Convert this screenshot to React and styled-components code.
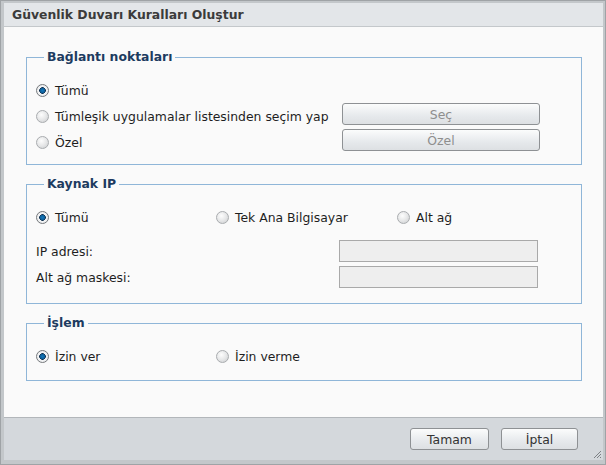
import React, { useState } from "react";
import styled, { createGlobalStyle } from "styled-components";

const GlobalStyle = createGlobalStyle`
  html, body {
    margin: 0;
    padding: 0;
    background: #ffffff;
  }
  body {
    font-family: "DejaVu Sans", Verdana, sans-serif;
    font-size: 12.4px;
    color: #1e1e1e;
  }
`;

const Window = styled.div`
  width: 606px;
  height: 465px;
  box-sizing: border-box;
  background: #c3c7ca;
  border: 1px solid #9fa3a6;
  padding: 2px 2px 4px 3px;
  display: flex;
  flex-direction: column;
`;

const Header = styled.div`
  height: 23px;
  background: #e3e6e9;
  border-bottom: 1px solid #c4c8cb;
  display: flex;
  align-items: center;
  padding-left: 8px;
  font-weight: bold;
  font-size: 12.4px;
  color: #3b3b3b;
`;

const Body = styled.div`
  flex: 1;
  background: #fafafa;
  padding: 30px 21px 0 22px;
  display: flex;
  flex-direction: column;
  gap: 19px;
`;

const Group = styled.div`
  border: 1px solid #8fb6d8;
  padding: 0 0 ${(p) => p.$bottom}px 9px;
`;

const Legend = styled.div`
  width: fit-content;
  margin: -9px 0 0 8px;
  padding: 0 3px 0 3px;
  background: #fafafa;
  line-height: 16px;
  font-weight: bold;
  color: #1d3b60;
`;

const Rows = styled.div`
  padding-top: ${(p) => p.$top}px;
  display: flex;
  flex-direction: column;
`;

const Row = styled.div`
  height: 26px;
  margin-top: ${(p) => p.$gap || 0}px;
  display: grid;
  grid-template-columns: ${(p) => p.$cols || "306px 1fr"};
  align-items: center;
`;

const RadioLabel = styled.label`
  display: flex;
  align-items: center;
  gap: 6px;
  white-space: nowrap;
  cursor: default;
`;

const RadioDot = styled.span`
  width: 13px;
  height: 13px;
  border-radius: 50%;
  box-sizing: border-box;
  flex: none;
  border: 1px solid ${(p) => (p.$on ? "#76797c" : "#a9acaf")};
  background: ${(p) =>
    p.$on
      ? "radial-gradient(circle, #1479bd 0, #0d5f9a 2.2px, #10304f 3px, #f4f5f6 3.6px, #e4e6e8 100%)"
      : "radial-gradient(circle at 40% 35%, #fdfdfd 0, #e6e7e8 50%, #c9cbcd 100%)"};
`;

const ActionButton = styled.button`
  width: ${(p) => p.$w}px;
  height: 22px;
  box-sizing: border-box;
  border: 1px solid #8e9194;
  border-radius: 3px;
  background: linear-gradient(#fbfcfc, #e6e9ec 60%, #dde0e3);
  font-family: inherit;
  font-size: 12.4px;
  color: ${(p) => (p.disabled ? "#8e8e8e" : "#333333")};
  padding: 0;
  align-self: ${(p) => (p.$top ? "start" : "center")};
`;

const TextBox = styled.input`
  width: 199px;
  height: 22px;
  box-sizing: border-box;
  border: 1px solid #a9a9a9;
  background: #eeeeee;
  margin: 0;
  padding: 0 4px;
`;

const Footer = styled.div`
  height: 42px;
  background: #d4d8dc;
  border-top: 1px solid #b2b6ba;
  display: flex;
  justify-content: flex-end;
  align-items: center;
  gap: 12px;
  padding-right: 25px;
  position: relative;
`;

const Grip = styled.svg`
  position: absolute;
  right: 1px;
  bottom: 1px;
`;

function Radio({ value, current, onPick, children }) {
  return (
    <RadioLabel onClick={() => onPick(value)}>
      <RadioDot $on={current === value} />
      {children}
    </RadioLabel>
  );
}

export default function App() {
  const [port, setPort] = useState("all");
  const [source, setSource] = useState("all");
  const [action, setAction] = useState("allow");

  return (
    <>
      <GlobalStyle />
      <Window>
        <Header>Güvenlik Duvarı Kuralları Oluştur</Header>
        <Body>
          <Group $bottom={9}>
            <Legend>Bağlantı noktaları</Legend>
            <Rows $top={12}>
              <Row>
                <Radio value="all" current={port} onPick={setPort}>Tümü</Radio>
              </Row>
              <Row>
                <Radio value="list" current={port} onPick={setPort}>
                  Tümleşik uygulamalar listesinden seçim yap
                </Radio>
                <ActionButton $w={198} $top disabled>Seç</ActionButton>
              </Row>
              <Row>
                <Radio value="custom" current={port} onPick={setPort}>Özel</Radio>
                <ActionButton $w={198} $top disabled>Özel</ActionButton>
              </Row>
            </Rows>
          </Group>

          <Group $bottom={13}>
            <Legend>Kaynak IP</Legend>
            <Rows $top={12}>
              <Row $cols="180px 181px 1fr">
                <Radio value="all" current={source} onPick={setSource}>Tümü</Radio>
                <Radio value="host" current={source} onPick={setSource}>Tek Ana Bilgisayar</Radio>
                <Radio value="subnet" current={source} onPick={setSource}>Alt ağ</Radio>
              </Row>
              <Row $cols="303px 1fr" $gap={8}>
                <span>IP adresi:</span>
                <TextBox disabled />
              </Row>
              <Row $cols="303px 1fr">
                <span>Alt ağ maskesi:</span>
                <TextBox disabled />
              </Row>
            </Rows>
          </Group>

          <Group $bottom={11}>
            <Legend>İşlem</Legend>
            <Rows $top={12}>
              <Row $cols="180px 1fr">
                <Radio value="allow" current={action} onPick={setAction}>İzin ver</Radio>
                <Radio value="deny" current={action} onPick={setAction}>İzin verme</Radio>
              </Row>
            </Rows>
          </Group>
        </Body>
        <Footer>
          <ActionButton $w={79}>Tamam</ActionButton>
          <ActionButton $w={77}>İptal</ActionButton>
          <Grip width="10" height="10" viewBox="0 0 10 10">
            <path d="M9 2 L2 9 M9 5 L5 9 M9 8 L8 9" stroke="#7d8185" strokeWidth="1" />
          </Grip>
        </Footer>
      </Window>
    </>
  );
}
